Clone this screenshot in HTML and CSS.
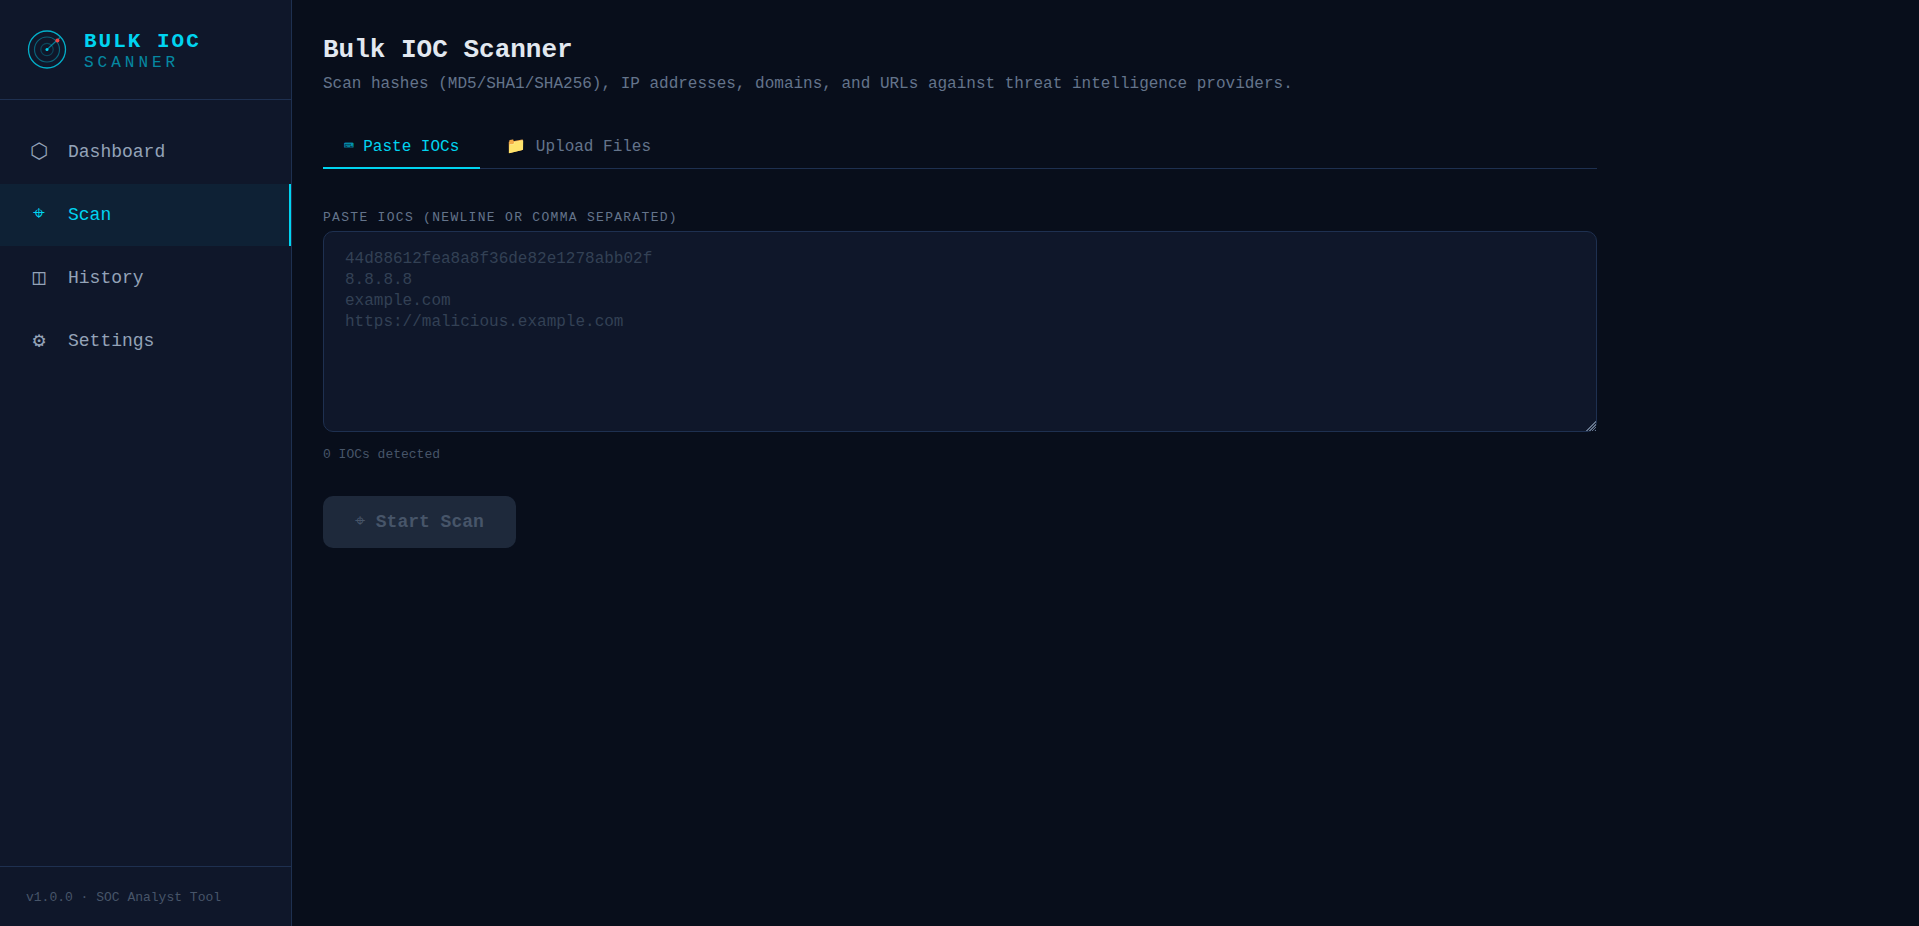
FILE: index.html
```html
<!DOCTYPE html>
<html lang="en">
  <head>
    <meta charset="UTF-8" />
    <meta name="viewport" content="width=device-width, initial-scale=1.0" />
    <title>Bulk IOC Scanner</title>
    <link rel="stylesheet" href="styles.css">
  </head>
  <body>
    <aside class="sidebar">
      <div class="brand">
        <svg class="logo" viewBox="0 0 42 42" fill="none" aria-hidden="true">
          <circle cx="21" cy="20.5" r="18.5" stroke="#00d4f0" stroke-width="1.3" opacity="0.8" />
          <circle cx="21" cy="20.5" r="12.5" stroke="#00d4f0" stroke-width="1.2" opacity="0.4" />
          <circle cx="21" cy="20.5" r="6.2" stroke="#00d4f0" stroke-width="1.2" opacity="0.25" />
          <line x1="21" y1="20.5" x2="34" y2="8.5" stroke="#00d4f0" stroke-width="1.2" opacity="0.55" />
          <circle cx="21" cy="20.5" r="1.5" fill="#00d4f0" />
          <circle cx="31.4" cy="11.4" r="2" fill="#ef4444" />
        </svg>
        <div>
          <div class="brand-name">BULK IOC</div>
          <div class="brand-sub">SCANNER</div>
        </div>
      </div>

      <nav class="nav">
        <a href="#dashboard"><span class="nav-icon">⬡</span>Dashboard</a>
        <a href="#scan" class="active" aria-current="page"><span class="nav-icon">⌖</span>Scan</a>
        <a href="#history"><span class="nav-icon">◫</span>History</a>
        <a href="#settings"><span class="nav-icon">⚙</span>Settings</a>
      </nav>

      <div class="version">v1.0.0 · SOC Analyst Tool</div>
    </aside>

    <main class="main">
      <div class="content">
        <h1>Bulk IOC Scanner</h1>
        <p class="subtitle">
          Scan hashes (MD5/SHA1/SHA256), IP addresses, domains, and URLs against threat intelligence providers.
        </p>

        <!-- Input mode tabs -->
        <div class="tabs" role="tablist">
          <button type="button" role="tab" class="tab active" aria-selected="true">⌨ Paste IOCs</button>
          <button type="button" role="tab" class="tab" aria-selected="false">📁 Upload Files</button>
        </div>

        <label class="field-label" for="iocInput">Paste IOCs (newline or comma separated)</label>
        <textarea id="iocInput" class="ioc-input" spellcheck="false" placeholder="44d88612fea8a8f36de82e1278abb02f
8.8.8.8
example.com
https://malicious.example.com"></textarea>
        <p class="count">0 IOCs detected</p>

        <button type="button" class="scan-btn" disabled><span class="btn-icon">⌖</span> Start Scan</button>
      </div>
    </main>
  </body>
</html>
```

FILE: styles.css
```css
:root {
  --bg: #080e1b;
  --panel: #0f172a;
  --border: #1e3050;
  --cyan: #00d4f0;
  --muted: #64748b;
  --dim: #475569;
}

* {
  box-sizing: border-box;
}

body {
  margin: 0;
  min-height: 100vh;
  display: flex;
  background: var(--bg);
  color: #e2e8f0;
  font-family: "Liberation Mono", monospace;
  font-size: 16px;
}

button,
textarea {
  font-family: inherit;
}

/* Sidebar */
.sidebar {
  width: 292px;
  flex-shrink: 0;
  display: flex;
  flex-direction: column;
  background: var(--panel);
  border-right: 1px solid var(--border);
}

.brand {
  display: flex;
  align-items: center;
  gap: 16px;
  padding: 29px 26px 28px;
  border-bottom: 1px solid var(--border);
}

.logo {
  width: 42px;
  height: 42px;
}

.brand-name {
  color: var(--cyan);
  font-size: 21px;
  font-weight: bold;
  line-height: 26px;
  letter-spacing: 2px;
}

.brand-sub {
  color: var(--cyan);
  opacity: 0.6;
  font-size: 16px;
  line-height: 16px;
  letter-spacing: 4px;
}

.nav {
  flex: 1;
  display: flex;
  flex-direction: column;
  gap: 1px;
  padding: 21px 0;
}

.nav a {
  display: flex;
  align-items: center;
  gap: 16px;
  height: 62px;
  padding: 0 26px;
  color: #94a3b8;
  font-size: 18px;
  text-decoration: none;
}

.nav a.active {
  color: var(--cyan);
  background: rgba(0, 212, 240, 0.06);
  border-right: 2px solid var(--cyan);
}

.nav-icon {
  width: 26px;
  padding-bottom: 2px;
  font-size: 21px;
  text-align: center;
}

.version {
  padding: 22px 26px 19px;
  border-top: 1px solid var(--border);
  color: var(--dim);
  font-size: 13px;
  line-height: 18px;
}

/* Scan page */
.main {
  flex: 1;
  min-width: 0;
  padding: 31px;
}

.content {
  max-width: 1274px;
}

h1 {
  margin: 0 0 5px;
  font-size: 26px;
  line-height: 38px;
}

.subtitle {
  margin: 0 0 28px;
  color: var(--muted);
  line-height: 21px;
}

.tabs {
  display: flex;
  gap: 5px;
  margin-bottom: 40px;
  border-bottom: 1px solid var(--border);
}

.tab {
  margin-bottom: -1px;
  padding: 12px 21px 8px;
  border: none;
  border-bottom: 2px solid transparent;
  background: none;
  color: var(--muted);
  font-size: 16px;
  line-height: 24px;
  cursor: pointer;
}

.tab.active {
  color: var(--cyan);
  border-bottom-color: var(--cyan);
}

.field-label {
  display: block;
  margin-bottom: 4px;
  color: var(--muted);
  font-size: 13px;
  line-height: 18px;
  letter-spacing: 0.1em;
  text-transform: uppercase;
}

.ioc-input {
  display: block;
  width: 100%;
  height: 201px;
  padding: 17px 21px;
  border: 1px solid var(--border);
  border-radius: 10px;
  background: var(--panel);
  color: #e2e8f0;
  font-size: 16px;
  line-height: 21px;
  resize: vertical;
}

.ioc-input::placeholder {
  color: #334155;
}

/* striped grip in the lower right corner */
.ioc-input::-webkit-resizer {
  background:
    linear-gradient(135deg, var(--panel) 62%, transparent 62%),
    repeating-linear-gradient(135deg, #64748b 0 1px, var(--panel) 1px 2px);
}

.count {
  margin: 14px 0 32px;
  color: var(--dim);
  font-size: 13px;
  line-height: 18px;
}

.scan-btn {
  padding: 13px 32px;
  border: none;
  border-radius: 10px;
  background: #1e293b;
  color: var(--dim);
  font-size: 18px;
  font-weight: bold;
  line-height: 26px;
}

.btn-icon {
  font-weight: normal;
}
```
